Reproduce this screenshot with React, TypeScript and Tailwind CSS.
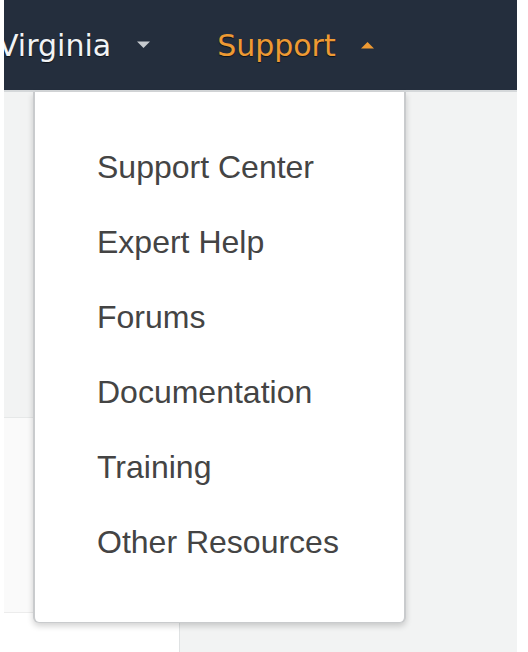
import React from "react";

const items = [
  "Support Center",
  "Expert Help",
  "Forums",
  "Documentation",
  "Training",
  "Other Resources",
];

function Caret({ up, color }: { up?: boolean; color: string }) {
  return (
    <svg width="15" height="8" viewBox="0 0 15 8" className="shrink-0">
      {up ? (
        <path d="M1 7.5 L7.5 1 L14 7.5 Z" fill={color} />
      ) : (
        <path d="M1 0.5 L14 0.5 L7.5 7 Z" fill={color} />
      )}
    </svg>
  );
}

export default function App() {
  return (
    <div className="relative w-[528px] h-[652px] overflow-hidden bg-white pl-[4px] pr-[11px]">
      <div className="h-full overflow-hidden">
        {/* top bar */}
        <div className="h-[90px] bg-[#242e3d] flex items-center font-['DejaVu_Sans',Verdana,sans-serif] text-[30px] [text-shadow:0_1px_1px_rgba(0,0,0,0.6)]">
          <div className="flex items-center -ml-[6px]">
            <span className="text-[#f1f3f5]">Virginia</span>
            <span className="ml-[25px]">
              <Caret color="#c6cacf" />
            </span>
          </div>
          <div className="flex items-center ml-[66px]">
            <span className="text-[#ee9a33]">Support</span>
            <span className="ml-[24px]">
              <Caret up color="#ee9a33" />
            </span>
          </div>
        </div>
        <div className="h-[2px] bg-[#d5d8da]" />

        {/* page behind the menu */}
        <div className="flex h-[560px]">
          <div className="w-[176px] flex flex-col border-r border-[#dfe2e3]">
            <div className="h-[326px] bg-[#f2f3f3] border-b border-[#e6e8e8]" />
            <div className="h-[195px] bg-[#fafafa] border-b border-[#ececec]" />
            <div className="flex-1 bg-white" />
          </div>
          <div className="flex-1 bg-[#f2f3f3]" />
        </div>
      </div>

      {/* dropdown */}
      <div className="absolute left-[33px] top-[92px] w-[373px] h-[531px] bg-white rounded-b-[6px] border-x-2 border-b border-[#c9cbcd] shadow-[0_3px_6px_rgba(0,0,0,0.18)]">
        <ul className="pt-[37px] pl-[62px] font-['Liberation_Sans',Arial,sans-serif] text-[32px] text-[#444444]">
          {items.map((label) => (
            <li key={label} className="h-[75px] flex items-center">
              {label}
            </li>
          ))}
        </ul>
      </div>
    </div>
  );
}
